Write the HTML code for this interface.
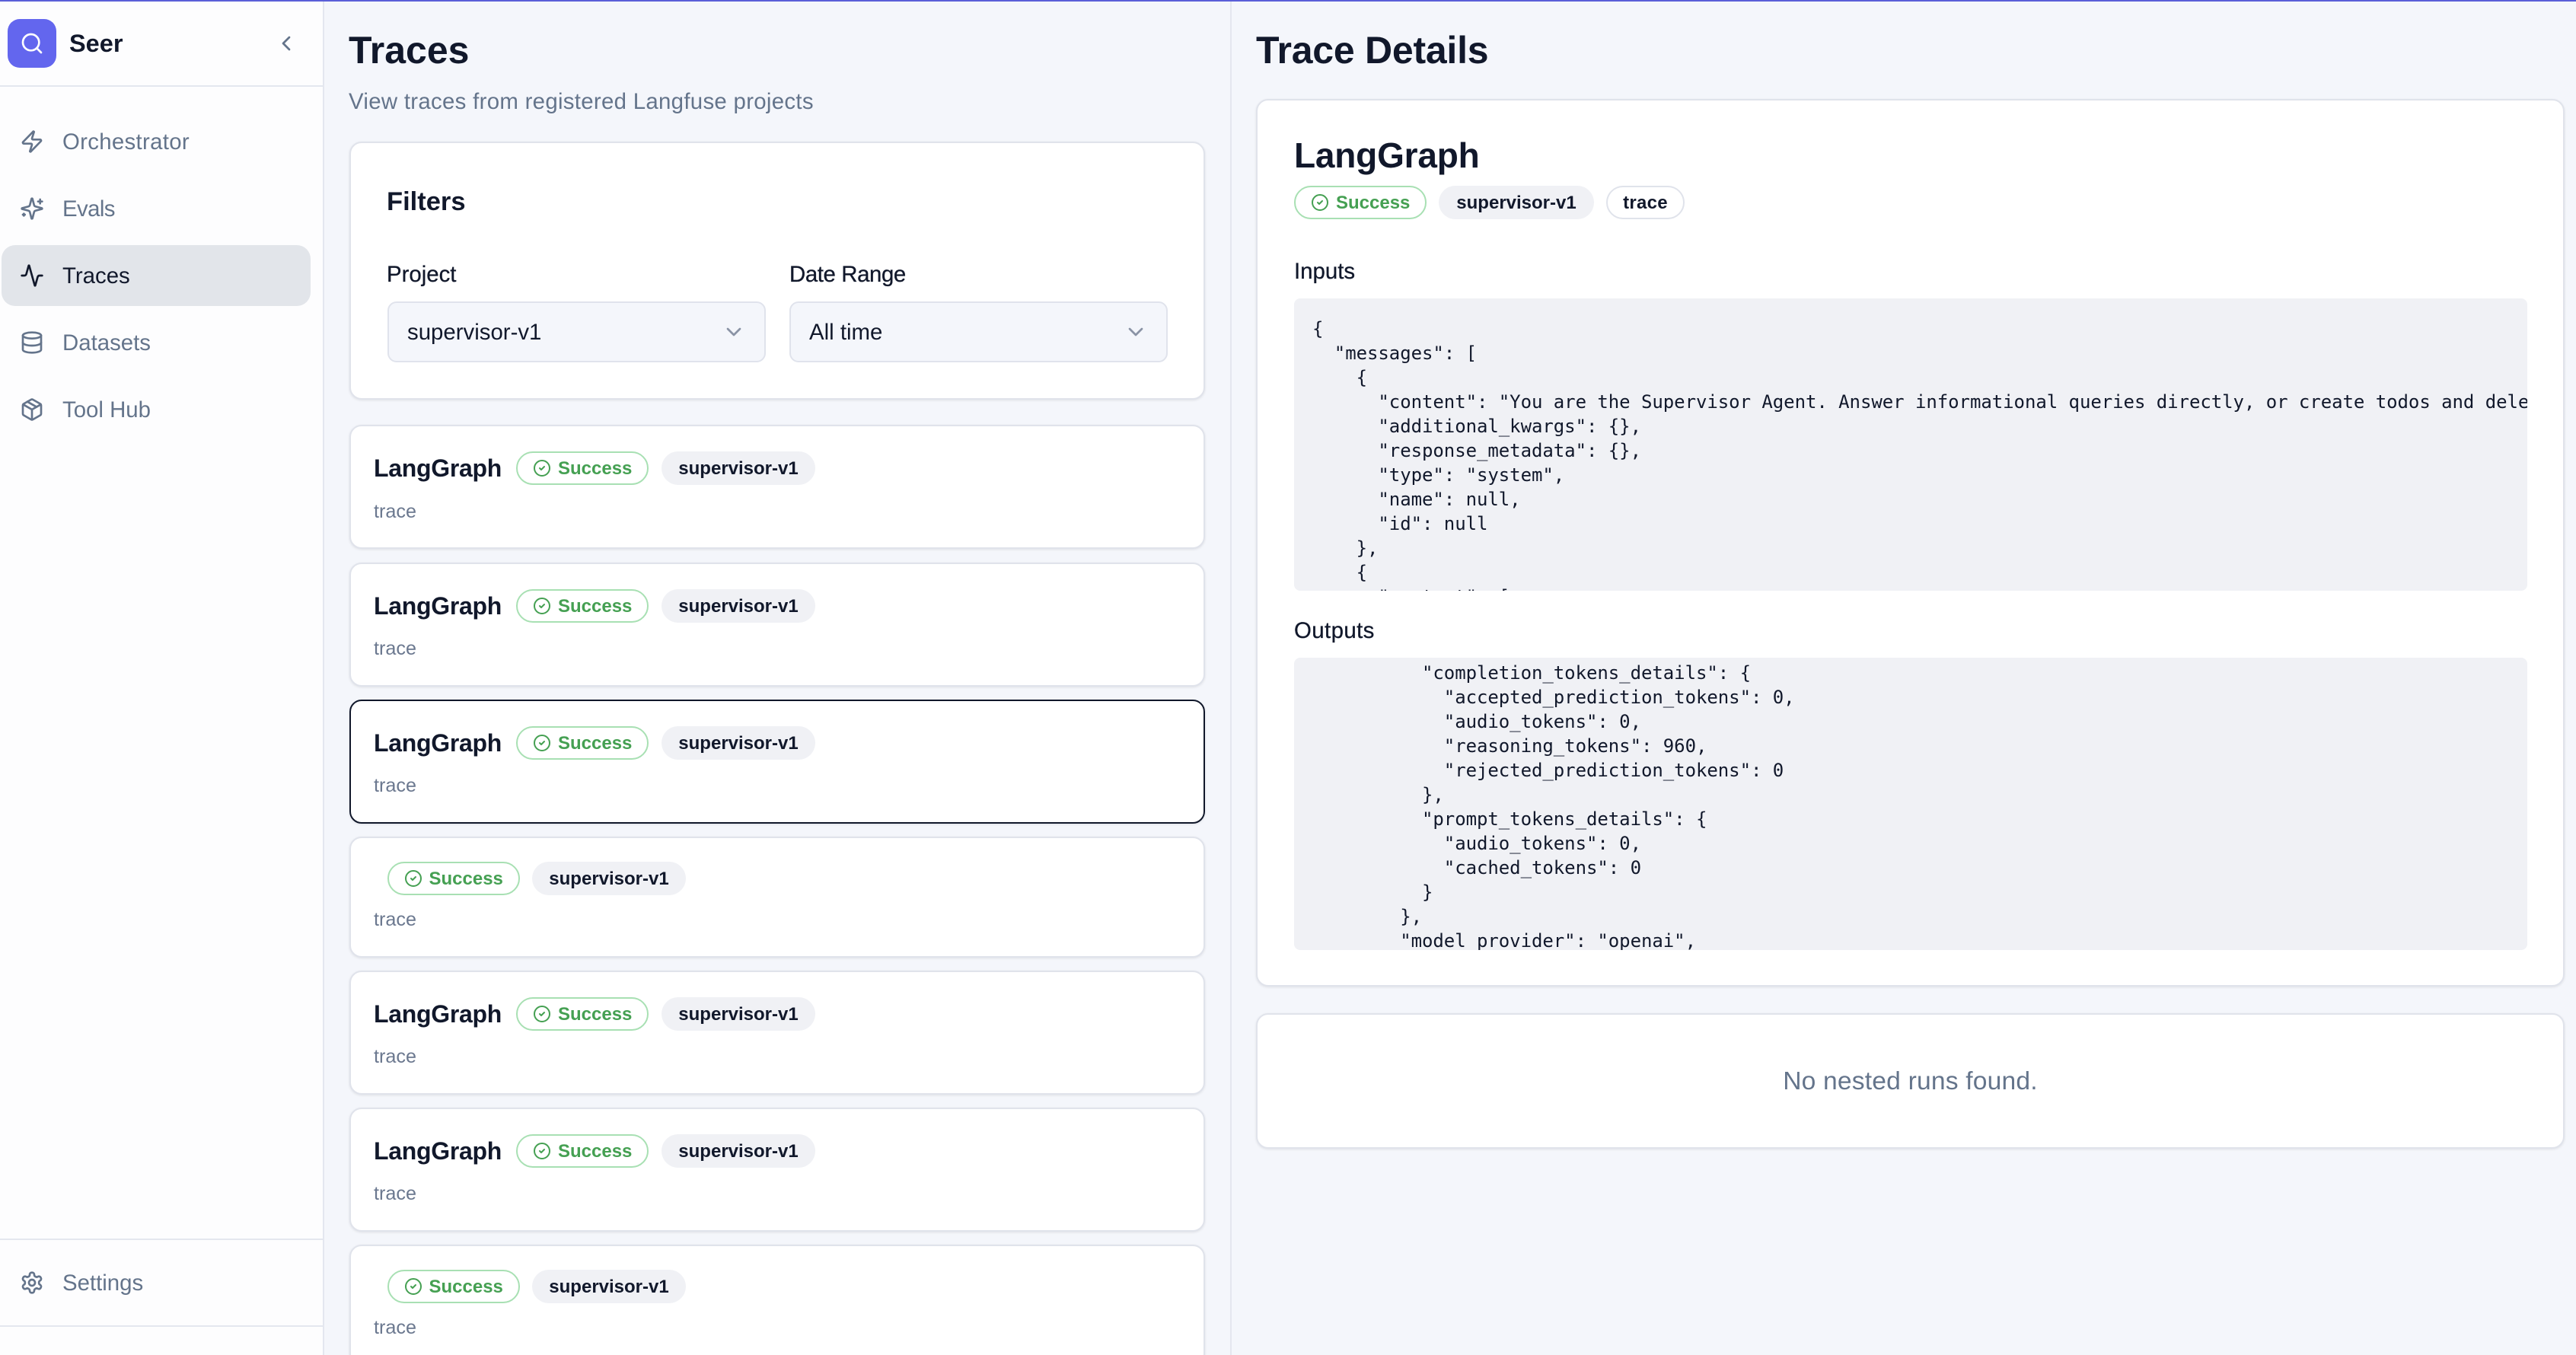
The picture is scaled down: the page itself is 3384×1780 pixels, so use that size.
<!DOCTYPE html>
<html lang="en">
<head>
<meta charset="utf-8">
<title>Seer - Traces</title>
<style>
*{box-sizing:border-box;margin:0;padding:0}
html,body{width:3384px;height:1780px;overflow:hidden;background:#f4f6fb;font-family:"Liberation Sans",Arial,sans-serif;color:#11182b}
.abs,.t,.card,.badge,svg.i{position:absolute}
.t{white-space:nowrap;line-height:40px;height:40px}
#top{position:absolute;left:0;top:0;width:3384px;height:2px;background:#5a5fd8;z-index:5}
#side{position:absolute;left:0;top:0;width:426px;height:1780px;background:#fdfdfe;border-right:2px solid #e4e7ef}
.hr{position:absolute;left:0;width:424px;height:2px;background:#e4e7ef}
#logo{position:absolute;left:10px;top:25px;width:64px;height:64px;background:#6366ee;border-radius:16px}
.nav{font-size:29.4px;color:#64748b}
.nav.on{color:#11182b}
#act{position:absolute;left:2px;top:322px;width:406px;height:80px;background:#e2e5ea;border-radius:18px}
svg.i{fill:none;stroke:currentColor;stroke-width:2;stroke-linecap:round;stroke-linejoin:round}
.ni{width:32px;height:32px;left:26px;color:#64748b}
#mid{position:absolute;left:426px;top:0;width:1192px;height:1780px;border-right:2px solid #e4e7ef;overflow:hidden}
h1{position:absolute;font-size:50px;font-weight:700;line-height:60px;white-space:nowrap}
.card{background:#fff;border:2px solid #e0e3eb;border-radius:16px;box-shadow:0 1px 3px rgba(0,0,0,.09)}
.tc{left:33px;width:1124px}
.tc.sel{border-color:#11182b}
.name{font-size:32px;font-weight:700;letter-spacing:-.3px;left:30px}
.sub{font-size:25.2px;color:#6b788f;left:30px}
.lab{font-size:29.4px;-webkit-text-stroke:.3px #11182b}
.sel-box{position:absolute;top:208px;height:80px;background:#f4f6fb;border:2px solid #e0e3ec;border-radius:12px;width:497px}
.sel-box .t{left:24px;top:19px;font-size:29.4px}
.sel-box svg{right:24px;top:22px;width:32px;height:32px;color:#8a93a5}
.badge{height:44px;border-radius:22px}
.ok{width:174px;border:2px solid #a8e0b3;background:#fff;color:#45a052}
.ok svg{left:20px;top:8px;width:24px;height:24px;color:#45a052}
.ok .t{left:53px;top:1px;line-height:40px;font-size:24px;font-weight:700}
.pj{width:202px;background:#f0f1f5;font-size:24px;font-weight:700;line-height:46px;text-align:center;white-space:nowrap}
.tr{border:2px solid #e0e3eb;background:#fff;font-size:24px;font-weight:700;letter-spacing:.3px;line-height:42px;text-align:center}
#right{position:absolute;left:1618px;top:0;width:1766px;height:1780px}
.code{position:absolute;left:82px;width:1620px;height:384px;background:#f0f1f5;border-radius:8px;overflow:hidden}
.code pre{position:absolute;left:24px;font-family:"DejaVu Sans Mono","Liberation Mono",monospace;font-size:24px;line-height:32px;letter-spacing:-.05px;color:#11182b;white-space:pre}
</style>
</head>
<body>
<div id="top"></div>

<aside id="side">
  <div id="logo">
    <svg class="i" style="left:16px;top:16px;width:32px;height:32px;color:#fff" viewBox="0 0 24 24"><circle cx="11" cy="11" r="8"/><path d="m21 21-4.34-4.34"/></svg>
  </div>
  <div class="t" style="left:91px;top:37px;font-size:32.5px;font-weight:700">Seer</div>
  <svg class="i" style="left:360px;top:41px;width:32px;height:32px;color:#64748b" viewBox="0 0 24 24"><path d="m15 18-6-6 6-6"/></svg>
  <div class="hr" style="top:112px"></div>

  <svg class="i ni" style="top:170px" viewBox="0 0 24 24"><path d="M4 14a1 1 0 0 1-.78-1.63l9.9-10.2a.5.5 0 0 1 .86.46l-1.92 6.02A1 1 0 0 0 13 10h7a1 1 0 0 1 .78 1.63l-9.9 10.2a.5.5 0 0 1-.86-.46l1.92-6.02A1 1 0 0 0 11 14z"/></svg>
  <div class="t nav" style="left:82px;top:167px;letter-spacing:.3px">Orchestrator</div>

  <svg class="i ni" style="top:258px" viewBox="0 0 24 24"><path d="M9.937 15.5A2 2 0 0 0 8.5 14.063l-6.135-1.582a.5.5 0 0 1 0-.962L8.5 9.936A2 2 0 0 0 9.937 8.5l1.582-6.135a.5.5 0 0 1 .963 0L14.063 8.5A2 2 0 0 0 15.5 9.937l6.135 1.581a.5.5 0 0 1 0 .964L15.5 14.063a2 2 0 0 0-1.437 1.437l-1.582 6.135a.5.5 0 0 1-.963 0z"/><path d="M20 3v4"/><path d="M22 5h-4"/><path d="M4 17v2"/><path d="M5 18H3"/></svg>
  <div class="t nav" style="left:82px;top:255px;letter-spacing:-.6px">Evals</div>

  <div id="act"></div>
  <svg class="i ni" style="top:346px;color:#11182b" viewBox="0 0 24 24"><path d="M22 12h-2.48a2 2 0 0 0-1.93 1.46l-2.35 8.36a.25.25 0 0 1-.48 0L9.24 2.18a.25.25 0 0 0-.48 0l-2.35 8.36A2 2 0 0 1 4.49 12H2"/></svg>
  <div class="t nav on" style="left:82px;top:343px">Traces</div>

  <svg class="i ni" style="top:434px" viewBox="0 0 24 24"><ellipse cx="12" cy="5" rx="9" ry="3"/><path d="M3 5V19A9 3 0 0 0 21 19V5"/><path d="M3 12A9 3 0 0 0 21 12"/></svg>
  <div class="t nav" style="left:82px;top:431px">Datasets</div>

  <svg class="i ni" style="top:522px" viewBox="0 0 24 24"><path d="M11 21.73a2 2 0 0 0 2 0l7-4A2 2 0 0 0 21 16V8a2 2 0 0 0-1-1.73l-7-4a2 2 0 0 0-2 0l-7 4A2 2 0 0 0 3 8v8a2 2 0 0 0 1 1.73z"/><path d="M12 22V12"/><path d="M3.29 7 12 12l8.71-5"/><path d="m7.5 4.27 9 5.15"/></svg>
  <div class="t nav" style="left:82px;top:519px">Tool Hub</div>

  <div class="hr" style="top:1627px"></div>
  <svg class="i ni" style="top:1669px" viewBox="0 0 24 24"><path d="M12.22 2h-.44a2 2 0 0 0-2 2v.18a2 2 0 0 1-1 1.73l-.43.25a2 2 0 0 1-2 0l-.15-.08a2 2 0 0 0-2.73.73l-.22.38a2 2 0 0 0 .73 2.73l.15.1a2 2 0 0 1 1 1.72v.51a2 2 0 0 1-1 1.74l-.15.09a2 2 0 0 0-.73 2.73l.22.38a2 2 0 0 0 2.73.73l.15-.08a2 2 0 0 1 2 0l.43.25a2 2 0 0 1 1 1.73V20a2 2 0 0 0 2 2h.44a2 2 0 0 0 2-2v-.18a2 2 0 0 1 1-1.73l.43-.25a2 2 0 0 1 2 0l.15.08a2 2 0 0 0 2.73-.73l.22-.39a2 2 0 0 0-.73-2.73l-.15-.08a2 2 0 0 1-1-1.74v-.5a2 2 0 0 1 1-1.74l.15-.09a2 2 0 0 0 .73-2.73l-.22-.38a2 2 0 0 0-2.73-.73l-.15.08a2 2 0 0 1-2 0l-.43-.25a2 2 0 0 1-1-1.73V4a2 2 0 0 0-2-2z"/><circle cx="12" cy="12" r="3"/></svg>
  <div class="t nav" style="left:82px;top:1666px">Settings</div>
  <div class="hr" style="top:1741px"></div>
</aside>

<main id="mid">
  <h1 style="left:32px;top:36px">Traces</h1>
  <div class="t" style="left:32px;top:114px;font-size:29.4px;letter-spacing:.3px;color:#64748b">View traces from registered Langfuse projects</div>

  <section class="card" style="left:33px;top:186px;width:1124px;height:339px">
    <div class="t" style="left:47px;top:57px;font-size:34.5px;font-weight:700">Filters</div>
    <div class="t lab" style="left:47px;top:153px">Project</div>
    <div class="t lab" style="left:576px;top:153px;letter-spacing:-.4px">Date Range</div>
    <div class="sel-box" style="left:48px">
      <div class="t">supervisor-v1</div>
      <svg class="i" viewBox="0 0 24 24"><path d="m6 9 6 6 6-6"/></svg>
    </div>
    <div class="sel-box" style="left:576px">
      <div class="t">All time</div>
      <svg class="i" viewBox="0 0 24 24"><path d="m6 9 6 6 6-6"/></svg>
    </div>
  </section>

  <article class="card tc" style="top:558px;height:163px">
    <div class="t name" style="top:35px">LangGraph</div>
    <div class="badge ok" style="left:217px;top:33px"><svg class="i" viewBox="0 0 24 24"><circle cx="12" cy="12" r="10"/><path d="m9 12 2 2 4-4"/></svg><div class="t">Success</div></div>
    <div class="badge pj" style="left:408px;top:33px">supervisor-v1</div>
    <div class="t sub" style="top:92px">trace</div>
  </article>

  <article class="card tc" style="top:739px;height:163px">
    <div class="t name" style="top:35px">LangGraph</div>
    <div class="badge ok" style="left:217px;top:33px"><svg class="i" viewBox="0 0 24 24"><circle cx="12" cy="12" r="10"/><path d="m9 12 2 2 4-4"/></svg><div class="t">Success</div></div>
    <div class="badge pj" style="left:408px;top:33px">supervisor-v1</div>
    <div class="t sub" style="top:91px">trace</div>
  </article>

  <article class="card tc sel" style="top:919px;height:163px">
    <div class="t name" style="top:35px">LangGraph</div>
    <div class="badge ok" style="left:217px;top:33px"><svg class="i" viewBox="0 0 24 24"><circle cx="12" cy="12" r="10"/><path d="m9 12 2 2 4-4"/></svg><div class="t">Success</div></div>
    <div class="badge pj" style="left:408px;top:33px">supervisor-v1</div>
    <div class="t sub" style="top:91px">trace</div>
  </article>

  <article class="card tc" style="top:1099px;height:159px">
    <div class="badge ok" style="left:47.5px;top:31px"><svg class="i" viewBox="0 0 24 24"><circle cx="12" cy="12" r="10"/><path d="m9 12 2 2 4-4"/></svg><div class="t">Success</div></div>
    <div class="badge pj" style="left:238px;top:31px">supervisor-v1</div>
    <div class="t sub" style="top:87px">trace</div>
  </article>

  <article class="card tc" style="top:1275px;height:163px">
    <div class="t name" style="top:35px">LangGraph</div>
    <div class="badge ok" style="left:217px;top:33px"><svg class="i" viewBox="0 0 24 24"><circle cx="12" cy="12" r="10"/><path d="m9 12 2 2 4-4"/></svg><div class="t">Success</div></div>
    <div class="badge pj" style="left:408px;top:33px">supervisor-v1</div>
    <div class="t sub" style="top:91px">trace</div>
  </article>

  <article class="card tc" style="top:1455px;height:163px">
    <div class="t name" style="top:35px">LangGraph</div>
    <div class="badge ok" style="left:217px;top:33px"><svg class="i" viewBox="0 0 24 24"><circle cx="12" cy="12" r="10"/><path d="m9 12 2 2 4-4"/></svg><div class="t">Success</div></div>
    <div class="badge pj" style="left:408px;top:33px">supervisor-v1</div>
    <div class="t sub" style="top:91px">trace</div>
  </article>

  <article class="card tc" style="top:1635px;height:159px">
    <div class="badge ok" style="left:47.5px;top:31px"><svg class="i" viewBox="0 0 24 24"><circle cx="12" cy="12" r="10"/><path d="m9 12 2 2 4-4"/></svg><div class="t">Success</div></div>
    <div class="badge pj" style="left:238px;top:31px">supervisor-v1</div>
    <div class="t sub" style="top:87px">trace</div>
  </article>
</main>

<section id="right">
  <h1 style="left:32px;top:36px;letter-spacing:-.25px">Trace Details</h1>

  <div class="card" style="left:32px;top:130px;width:1719px;height:1166px">
    <div class="t" style="left:48px;top:52px;font-size:46px;font-weight:700;letter-spacing:-.2px;line-height:40px">LangGraph</div>
    <div class="badge ok" style="left:48px;top:112px"><svg class="i" viewBox="0 0 24 24"><circle cx="12" cy="12" r="10"/><path d="m9 12 2 2 4-4"/></svg><div class="t">Success</div></div>
    <div class="badge pj" style="left:238px;top:112px;width:204px">supervisor-v1</div>
    <div class="badge tr" style="left:458px;top:112px;width:103px">trace</div>
    <div class="t lab" style="left:48px;top:205px">Inputs</div>
    <div class="code" style="left:48px;top:260px">
<pre style="top:24px">{
  "messages": [
    {
      "content": "You are the Supervisor Agent. Answer informational queries directly, or create todos and delegate tasks to workers.",
      "additional_kwargs": {},
      "response_metadata": {},
      "type": "system",
      "name": null,
      "id": null
    },
    {
      "content": [</pre>
    </div>
    <div class="t lab" style="left:48px;top:677px;letter-spacing:.4px">Outputs</div>
    <div class="code" style="left:48px;top:732px">
<pre style="top:4px">          "completion_tokens_details": {
            "accepted_prediction_tokens": 0,
            "audio_tokens": 0,
            "reasoning_tokens": 960,
            "rejected_prediction_tokens": 0
          },
          "prompt_tokens_details": {
            "audio_tokens": 0,
            "cached_tokens": 0
          }
        },
        "model_provider": "openai",</pre>
    </div>
  </div>

  <div class="card" style="left:32px;top:1331px;width:1719px;height:178px">
    <div class="t" style="left:0;right:0;top:68px;text-align:center;font-size:33.6px;letter-spacing:.2px;color:#64748b">No nested runs found.</div>
  </div>
</section>
</body>
</html>
